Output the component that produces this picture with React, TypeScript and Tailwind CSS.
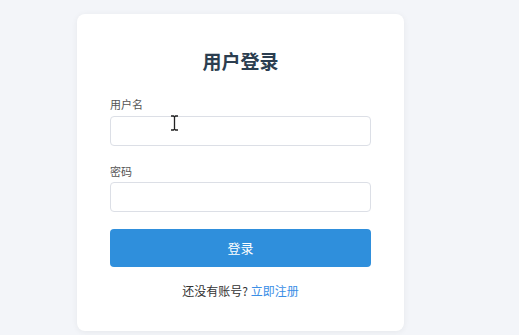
export default function App() {
  return (
    <div
      className="relative min-h-[335px] w-full overflow-hidden bg-[#f3f5f9] pl-[77px] pt-[14px]"
      style={{ fontFamily: '"Noto Sans CJK SC", "Noto Sans", sans-serif' }}
    >
      <div className="flex w-[327px] flex-col rounded-lg bg-white px-[33px] pb-[31px] pt-[34px] shadow-[0_1px_6px_rgba(0,0,0,0.06)]">
        <h1 className="text-center text-[19px] font-bold leading-[26px] text-[#2c3e50]">用户登录</h1>

        <label className="mt-[22px] mb-[4px] text-[11px] leading-[16px] text-[#555]">用户名</label>
        <input className="h-[30px] rounded-[4px] border border-[#dcdfe6] bg-white px-2 text-[13px] outline-none" />

        <label className="mt-[17px] mb-[3px] text-[11px] leading-[16px] text-[#555]">密码</label>
        <input type="password" className="h-[30px] rounded-[4px] border border-[#dcdfe6] bg-white px-2 text-[13px] outline-none" />

        <button className="mt-[17px] h-[38px] rounded-[4px] bg-[#2f8fdc] text-[13px] text-white">登录</button>

        <p className="mt-[15px] text-center text-[12px] leading-[18px] text-[#333]">
          还没有账号? <span className="text-[#3a8ee6]">立即注册</span>
        </p>
      </div>

      {/* mouse cursor */}
      <svg className="absolute left-[170px] top-[115px]" width="9" height="16" viewBox="0 0 9 16">
        <path d="M1 1h2.5L4.5 2l1-1H8M4.5 2v12M1 15h2.5l1-1 1 1H8" fill="none" stroke="#222" strokeWidth="1.3" />
      </svg>
    </div>
  );
}
